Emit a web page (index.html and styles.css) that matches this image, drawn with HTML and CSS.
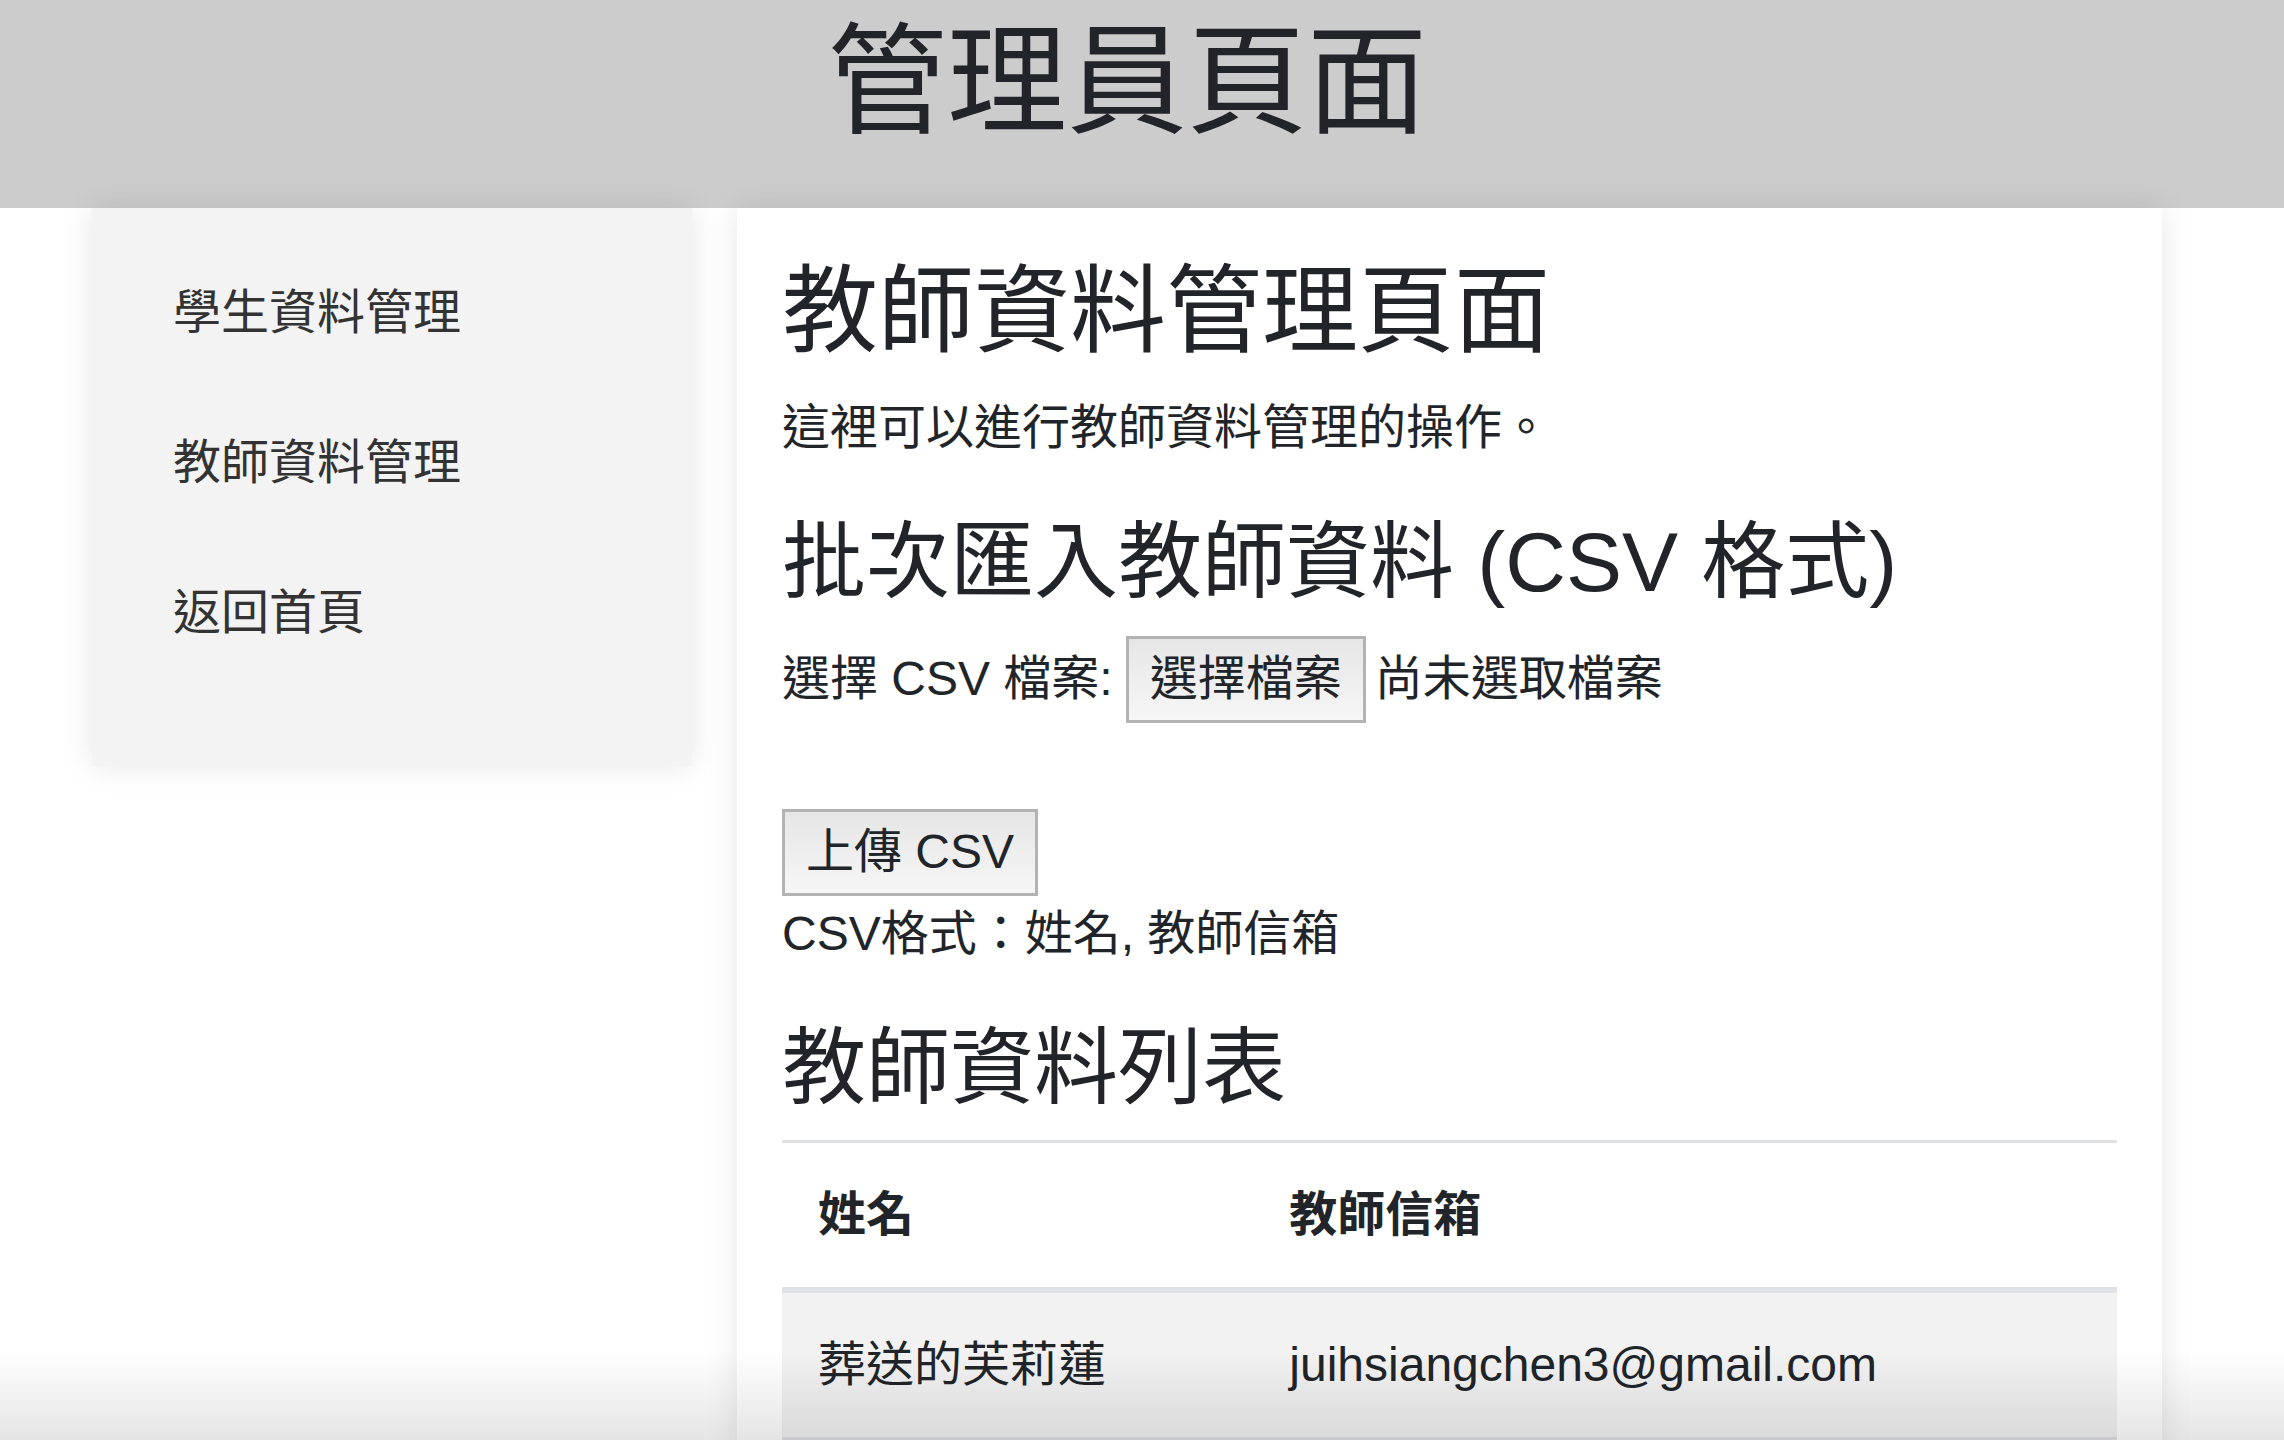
FILE: index.html
```html
<!DOCTYPE html>
<html lang="zh-Hant">
<head>
<meta charset="utf-8">
<title>管理員頁面</title>
<link rel="stylesheet" href="styles.css">
</head>
<body>
<header class="site-header">
  <h1 class="site-title">管理員頁面</h1>
</header>
<div class="page">
  <nav class="sidebar">
    <ul class="nav-list">
      <li><a class="nav-link" href="#">學生資料管理</a></li>
      <li><a class="nav-link" href="#">教師資料管理</a></li>
      <li><a class="nav-link" href="#">返回首頁</a></li>
    </ul>
  </nav>
  <main class="content">
    <h1 class="page-title">教師資料管理頁面</h1>
    <p class="intro">這裡可以進行教師資料管理的操作。</p>
    <h2 class="section-title">批次匯入教師資料 (CSV 格式)</h2>
    <form class="upload-form">
      <div class="file-row">
        <span class="file-label">選擇 CSV 檔案:</span>
        <button type="button" class="btn file-btn">選擇檔案</button>
        <span class="file-status">尚未選取檔案</span>
      </div>
      <button type="button" class="btn upload-btn">上傳 CSV</button>
    </form>
    <p class="format-note">CSV格式：姓名, 教師信箱</p>
    <h2 class="section-title list-title">教師資料列表</h2>
    <table class="data-table">
      <thead>
        <tr><th>姓名</th><th>教師信箱</th></tr>
      </thead>
      <tbody>
        <tr class="striped"><td>葬送的芙莉蓮</td><td>juihsiangchen3@gmail.com</td></tr>
      </tbody>
    </table>
  </main>
</div>
<div class="bottom-fade"></div>
</body>
</html>
```

FILE: styles.css
```css
html, body {
  margin: 0;
  padding: 0;
}

body {
  font-family: "Liberation Sans", "Noto Sans CJK TC", sans-serif;
  font-size: 48px;
  line-height: 1.5;
  color: #212529;
  background: #ffffff;
}

.site-header {
  background: #cccccc;
  height: 208px;
  box-sizing: border-box;
  padding: 10px 30px 0 0;
  text-align: center;
}

.site-title {
  margin: 0;
  font-size: 120px;
  line-height: 144px;
  font-weight: 400;
  color: #212529;
}

.page {
  display: flex;
  align-items: flex-start;
  gap: 45px;
  padding: 0 92px;
  margin-right: 30px;
}

.sidebar {
  flex: 0 0 600px;
  background: #f3f3f3;
  padding: 30px 0;
  box-shadow: 0 0 30px rgba(0, 0, 0, 0.1);
}

.nav-list {
  list-style: none;
  margin: 0 0 48px;
  padding: 0;
}

.nav-link {
  display: block;
  padding: 39px 51px 39px 81px;
  line-height: 72px;
  color: #333333;
  text-decoration: none;
}

.content {
  flex: 1 1 auto;
  background: #ffffff;
  padding: 45px 45px 45px;
  min-height: 1400px;
  box-shadow: 0 0 30px rgba(0, 0, 0, 0.1);
}

.page-title {
  margin: 0 0 24px;
  font-size: 96px;
  line-height: 1.2;
  font-weight: 400;
}

.intro {
  margin: 0 0 48px;
}

.section-title {
  margin: 0 0 24px;
  font-size: 84px;
  line-height: 1.2;
  font-weight: 400;
}

.list-title {
  margin-bottom: 21px;
}

.upload-form {
  margin: 0;
}

.file-row {
  display: flex;
  align-items: center;
  height: 87px;
  margin-top: -1px;
}

.file-label {
  margin-right: 13px;
}

.btn {
  font-family: inherit;
  font-size: 48px;
  line-height: 72px;
  color: #212529;
  height: 87px;
  box-sizing: border-box;
  border: 3px solid #b3b3b3;
  border-radius: 0;
  padding: 0 21px;
  background: linear-gradient(to bottom, #e6e6e6, #f6f6f6);
  cursor: pointer;
}

.file-status {
  margin-left: 9px;
}

.upload-btn {
  display: block;
  margin-top: 86px;
}

.format-note {
  margin: 2px 0 48px;
}

.data-table {
  width: 100%;
  border-collapse: collapse;
}

.data-table th,
.data-table td {
  text-align: left;
  padding: 36px;
  line-height: 72px;
  border-top: 3px solid #dee2e6;
  vertical-align: top;
}

.data-table th {
  font-weight: 700;
  border-bottom: 6px solid #dee2e6;
}

.data-table tbody tr:last-child td {
  border-bottom: 3px solid #dee2e6;
}

.striped {
  background: #f2f2f2;
}

.bottom-fade {
  position: fixed;
  left: 0;
  right: 0;
  bottom: 0;
  height: 90px;
  pointer-events: none;
  background: linear-gradient(to bottom, rgba(0, 0, 0, 0), rgba(0, 0, 0, 0.1));
}
```
